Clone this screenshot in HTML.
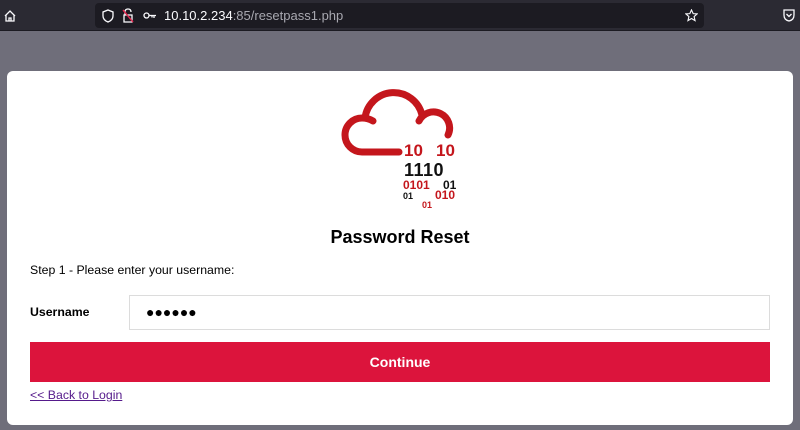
<!DOCTYPE html>
<html><head><style>
*{margin:0;padding:0;box-sizing:border-box}
body{width:800px;height:430px;overflow:hidden;background:#6f6e7a;font-family:"Liberation Sans",sans-serif;position:relative}
.tb{position:absolute;left:0;top:0;width:800px;height:31px;background:#2b2a33;border-bottom:1px solid #1c1b22}
.url{position:absolute;left:95px;top:3px;width:609px;height:25px;background:#1c1b22;border-radius:4px;color:#fbfbfe;font-size:13px;line-height:25px}
.card{position:absolute;left:7px;top:71px;width:786px;height:354px;background:#fff;border-radius:6px}
.abs{position:absolute}
</style></head><body>
<div class="tb">
<svg class="abs" style="left:3px;top:9px" width="14" height="14" viewBox="0 0 14 14"><path d="M2 7 L7 2 L12 7 M3 6 V12 H11 V6 M6 12 V9 H8 V12" fill="none" stroke="#fbfbfe" stroke-width="1.3"/></svg>
<svg class="abs" style="left:782px;top:8px" width="14" height="14" viewBox="0 0 14 14"><path d="M2 2 H12 V7 Q12 12 7 13 Q2 12 2 7 Z M4.5 6 L7 8.5 L9.5 6" fill="none" stroke="#fbfbfe" stroke-width="1.3"/></svg>
<div class="url">
<svg class="abs" style="left:7px;top:6px" width="12" height="14" viewBox="0 0 12 14"><path d="M6 1 L11 3 V7 Q11 11 6 13 Q1 11 1 7 V3 Z" fill="none" stroke="#fbfbfe" stroke-width="1.3"/></svg>
<svg class="abs" style="left:27px;top:5px" width="12" height="15" viewBox="0 0 12 15"><path d="M3 7 V4 Q3 1 6 1 Q9 1 9 4 M2 7 H10 V14 H2 Z" fill="none" stroke="#fbfbfe" stroke-width="1.3"/><path d="M1 2 L11 14" stroke="#e22850" stroke-width="1.4"/></svg>
<svg class="abs" style="left:48px;top:8px" width="14" height="9" viewBox="0 0 14 9"><circle cx="3.5" cy="4.5" r="2.5" fill="none" stroke="#fbfbfe" stroke-width="1.3"/><path d="M6 4.5 H13 M11 4.5 V7 M9 4.5 V6.5" stroke="#fbfbfe" stroke-width="1.3" fill="none"/></svg>
<span class="abs" style="left:69px">10.10.2.234<span style="color:#a8a8b0">:85/resetpass1.php</span></span>
<svg class="abs" style="left:590px;top:6px" width="13" height="13" viewBox="0 0 14 14"><path d="M7 1 L8.8 5 L13 5.3 L9.8 8.2 L10.8 12.5 L7 10.2 L3.2 12.5 L4.2 8.2 L1 5.3 L5.2 5 Z" fill="none" stroke="#fbfbfe" stroke-width="1.2"/></svg>
</div>
</div>
<div class="card">
<svg class="abs" style="left:0;top:0" width="786" height="150">
<path d="M392 81 H355 A17 17 0 0 1 355 47 Q361 47 366 50" fill="none" stroke="#c4161c" stroke-width="7" stroke-linecap="round"/>
<path d="M358 47 A29 29 0 0 1 415 44" fill="none" stroke="#c4161c" stroke-width="7" stroke-linecap="round"/>
<path d="M412 50 A15 15 0 0 1 441 64" fill="none" stroke="#c4161c" stroke-width="7" stroke-linecap="round"/>
<g font-family="Liberation Sans,sans-serif" font-weight="bold">
<text x="397" y="85" font-size="17" fill="#c4161c">10</text>
<text x="429" y="85" font-size="17" fill="#c4161c">10</text>
<text x="397" y="105" font-size="18" fill="#111" letter-spacing="0.5">1110</text>
<text x="396" y="118" font-size="12" fill="#c4161c">0101</text>
<text x="436" y="118" font-size="12" fill="#111">01</text>
<text x="396" y="128" font-size="9" fill="#111">01</text>
<text x="428" y="128" font-size="12" fill="#c4161c">010</text>
<text x="415" y="137" font-size="9" fill="#c4161c">01</text>
</g>
</svg>
<div class="abs" style="left:0;width:786px;top:156px;text-align:center;font-size:18px;font-weight:bold;color:#000">Password Reset</div>
<div class="abs" style="left:23px;top:192px;font-size:12.3px;color:#000">Step 1 - Please enter your username:</div>
<div class="abs" style="left:23px;top:234px;font-size:12.3px;font-weight:bold;color:#000">Username</div>
<div class="abs" style="left:122px;top:224px;width:641px;height:35px;border:1px solid #dcdcdc;font-size:14px;line-height:33px;padding-left:16px">●●●●●●</div>
<div class="abs" style="left:23px;top:271px;width:740px;height:40px;background:#dc143c;color:#fff;font-weight:bold;font-size:14px;text-align:center;line-height:40px">Continue</div>
<div class="abs" style="left:23px;top:317px;font-size:12.3px;color:#551a8b;text-decoration:underline">&lt;&lt; Back to Login</div>
</div>
</body></html>
